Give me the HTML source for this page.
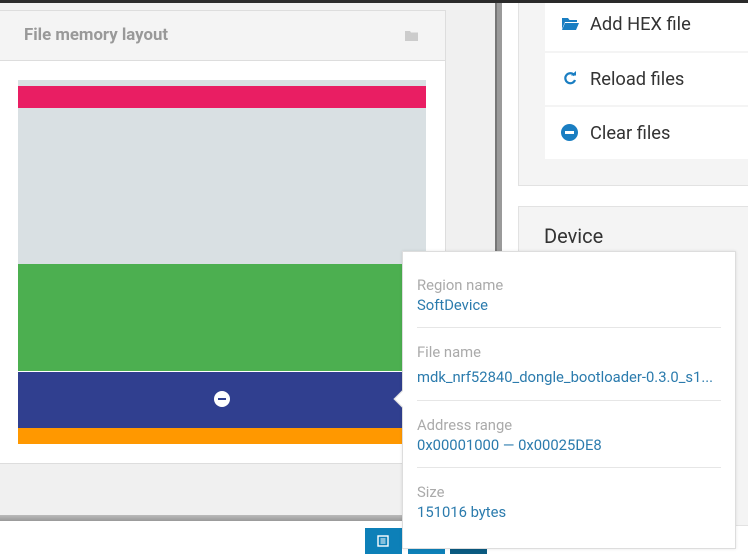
<!DOCTYPE html>
<html><head><meta charset="utf-8"><style>
*{margin:0;padding:0;box-sizing:border-box}
body{width:748px;height:554px;overflow:hidden;position:relative;background:#f0f0f0;font-family:"Roboto","Liberation Sans",sans-serif}
.a{position:absolute}
.t{font-size:14.8px;line-height:16px}
</style></head><body>
<div class="a" style="left:0;top:0;width:748px;height:3px;background:#2a2a2a"></div>
<div class="a" style="left:0;top:3px;width:495px;height:512px;background:#f0f0f0"></div>
<div class="a" style="left:0;top:10px;width:446px;height:454px;background:#fff;border:1px solid #ddd;border-left:none"></div>
<div class="a" style="left:0;top:10px;width:446px;height:51px;background:#f4f4f4;border:1px solid #ddd;border-left:none"></div>
<div class="a" style="left:24px;top:25px;font-size:16.8px;font-weight:bold;color:#999">File memory layout</div>
<svg class="a" style="left:405px;top:30px" width="14" height="11" viewBox="0 0 14 11"><path d="M0 1h5l1 1.5h7v8.5H0z" fill="#ccc"/></svg>
<div class="a" style="left:18px;top:80px;width:408px;height:6px;background:#d9e0e3"></div>
<div class="a" style="left:18px;top:86px;width:408px;height:22px;background:#e91e63"></div>
<div class="a" style="left:18px;top:108px;width:408px;height:156px;background:#d9e0e3"></div>
<div class="a" style="left:18px;top:264px;width:408px;height:107px;background:#4caf50"></div>
<div class="a" style="left:18px;top:372px;width:408px;height:56px;background:#303f8f"></div>
<div class="a" style="left:18px;top:428px;width:408px;height:16px;background:#ff9800"></div>
<div class="a" style="left:214px;top:391px;width:16px;height:16px;border-radius:50%;background:#fff"><div class="a" style="left:4px;top:7px;width:8px;height:2px;background:#303f8f"></div></div>
<div class="a" style="left:495px;top:3px;width:7px;height:512px;background:#9a9a9a;border-left:2px solid #777"></div>
<div class="a" style="left:0;top:515px;width:502px;height:6px;background:linear-gradient(#bbb,#999)"></div>
<div class="a" style="left:0;top:521px;width:748px;height:33px;background:#fff"></div>
<div class="a" style="left:365px;top:528px;width:37px;height:26px;background:#0d80b8"></div>
<svg class="a" style="left:377px;top:535px" width="12" height="12" viewBox="0 0 12 12"><rect x="1" y="1" width="10" height="10" fill="none" stroke="#fff" stroke-width="1.4"/><path d="M3.5 4h5M3.5 6h5M3.5 8h5" stroke="#fff"/></svg>
<div class="a" style="left:408px;top:532px;width:37px;height:22px;background:#0d80b8"></div>
<div class="a" style="left:450px;top:532px;width:37px;height:22px;background:#0b5a80"></div>
<div class="a" style="left:502px;top:3px;width:246px;height:518px;background:#fff"></div>
<div class="a" style="left:518px;top:3px;width:230px;height:183px;background:#f4f4f4;border:1px solid #e2e2e2;border-top:none;border-right:none"></div>
<div class="a" style="left:545px;top:3px;width:203px;height:48px;background:#fff"></div>
<div class="a" style="left:545px;top:53px;width:203px;height:52px;background:#fff"></div>
<div class="a" style="left:545px;top:107px;width:203px;height:52px;background:#fff"></div>
<svg class="a" style="left:562px;top:17px" width="17" height="13" viewBox="0 0 17 13"><path d="M0 1h6l1.5 2H15v2H3L0 12z" fill="#1a7ec2"/><path d="M3 6h14l-3 7H0z" fill="#1a7ec2"/></svg>
<div class="a" style="left:590px;top:14px;font-size:18.3px;color:#333">Add HEX file</div>
<svg class="a" style="left:563px;top:71px" width="14" height="14" viewBox="0 0 14 14"><path d="M11.5 4.5A5 5 0 1 0 12 9" fill="none" stroke="#1a7ec2" stroke-width="2.2"/><path d="M8 4.5h5V0z" fill="#1a7ec2"/></svg>
<div class="a" style="left:590px;top:69px;font-size:18.3px;color:#333">Reload files</div>
<div class="a" style="left:561px;top:124px;width:17px;height:17px;border-radius:50%;background:#1a7ec2"><div class="a" style="left:4px;top:7px;width:9px;height:3px;background:#fff"></div></div>
<div class="a" style="left:590px;top:123px;font-size:18.3px;color:#333">Clear files</div>
<div class="a" style="left:518px;top:206px;width:230px;height:320px;background:#f4f4f4;border:1px solid #e2e2e2;border-right:none"></div>
<div class="a" style="left:544px;top:224px;font-size:20px;color:#333">Device</div>
<div class="a" style="left:402px;top:251px;width:334px;height:298px;background:#fff;border:1px solid #ddd;box-shadow:0 0 3px rgba(0,0,0,.1)"></div>
<div class="a" style="left:396px;top:393px;width:12px;height:12px;background:#fff;transform:rotate(45deg);border-left:1px solid #ddd;border-bottom:1px solid #ddd"></div>
<div class="a t" style="left:417px;top:277px;color:#aaa">Region name</div>
<div class="a t" style="left:417px;top:297px;color:#2b7bad">SoftDevice</div>
<div class="a" style="left:417px;top:327px;width:304px;height:1px;background:#e6e6e6"></div>
<div class="a t" style="left:417px;top:344px;color:#aaa">File name</div>
<div class="a t" style="left:417px;top:369px;color:#2b7bad">mdk_nrf52840_dongle_bootloader-0.3.0_s1...</div>
<div class="a" style="left:417px;top:400px;width:304px;height:1px;background:#e6e6e6"></div>
<div class="a t" style="left:417px;top:417px;color:#aaa">Address range</div>
<div class="a t" style="left:417px;top:437px;color:#2b7bad">0x00001000 — 0x00025DE8</div>
<div class="a" style="left:417px;top:467px;width:304px;height:1px;background:#e6e6e6"></div>
<div class="a t" style="left:417px;top:484px;color:#aaa">Size</div>
<div class="a t" style="left:417px;top:504px;color:#2b7bad">151016 bytes</div>
</body></html>
